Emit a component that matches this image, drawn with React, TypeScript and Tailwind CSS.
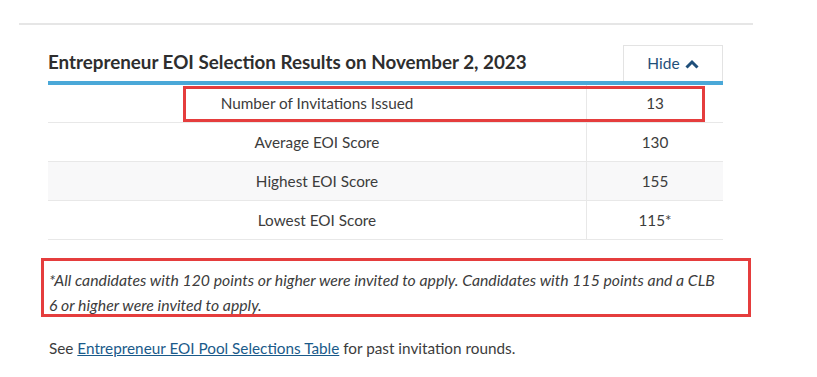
const rows = [
  { label: 'Number of Invitations Issued', value: '13' },
  { label: 'Average EOI Score', value: '130' },
  { label: 'Highest EOI Score', value: '155' },
  { label: 'Lowest EOI Score', value: '115*' },
]

function ChevronUp() {
  return (
    <svg width="14" height="10" viewBox="0 0 14 10" className="ml-[5px] mt-[1px]">
      <path d="M1.5 8.5 L7 3 L12.5 8.5" fill="none" stroke="#1f4f7a" strokeWidth="3" />
    </svg>
  )
}

export default function App() {
  return (
    <div className="relative w-[817px] h-[377px] bg-white text-[#333] font-['Lato','Liberation_Sans',sans-serif] overflow-hidden">
      <div className="ml-[19px] mt-[23px] w-[734px] h-[2px] bg-[#e6e6e6]" />

      <div className="relative ml-[48px] mt-[20px] w-[675px]">
        <div className="flex items-end justify-between h-[36px]">
          <h2 className="text-[18.8px] font-bold text-[#2e2e2e] leading-none pb-[9px]">
            Entrepreneur EOI Selection Results on November 2, 2023
          </h2>
          <button className="w-[100px] h-[36px] border border-b-0 border-[#e3e3e3] flex items-center justify-center text-[15.5px] text-[#1f4f7a]">
            Hide
            <ChevronUp />
          </button>
        </div>
        <div className="h-[4px] bg-[#4aa8d8]" />

        <div className="text-[15.3px] text-[#3c3c3c]">
          {rows.map((r, i) => (
            <div
              key={r.label}
              className={`flex border-b border-[#e8e8e8] ${i === 0 ? 'h-[38px]' : 'h-[39px]'} ${i === 2 ? 'bg-[#f8f8f9]' : ''}`}
            >
              <div className="w-[538px] flex items-center justify-center">{r.label}</div>
              <div className="flex-1 border-l border-[#e8e8e8] flex items-center justify-center">{r.value}</div>
            </div>
          ))}
        </div>

        {/* highlight around first row */}
        <div className="absolute left-[135px] top-[41px] w-[522px] h-[36px] border-[3px] border-[#e53d3d]" />
      </div>

      <div className="relative ml-[41px] mt-[18px] w-[710px] h-[59px] border-[3px] border-[#e53d3d] pl-[5px] pt-[6px]">
        <p className="italic text-[15.8px] leading-[25px] text-[#3c3c3c] whitespace-nowrap">
          *All candidates with 120 points or higher were invited to apply. Candidates with 115 points and a CLB
          <br />
          6 or higher were invited to apply.
        </p>
      </div>

      <p className="ml-[49px] mt-[20px] text-[15.3px] text-[#3c3c3c]">
        See{' '}
        <a href="#" className="underline text-[#1a5a8a]">
          Entrepreneur EOI Pool Selections Table
        </a>{' '}
        for past invitation rounds.
      </p>
    </div>
  )
}
